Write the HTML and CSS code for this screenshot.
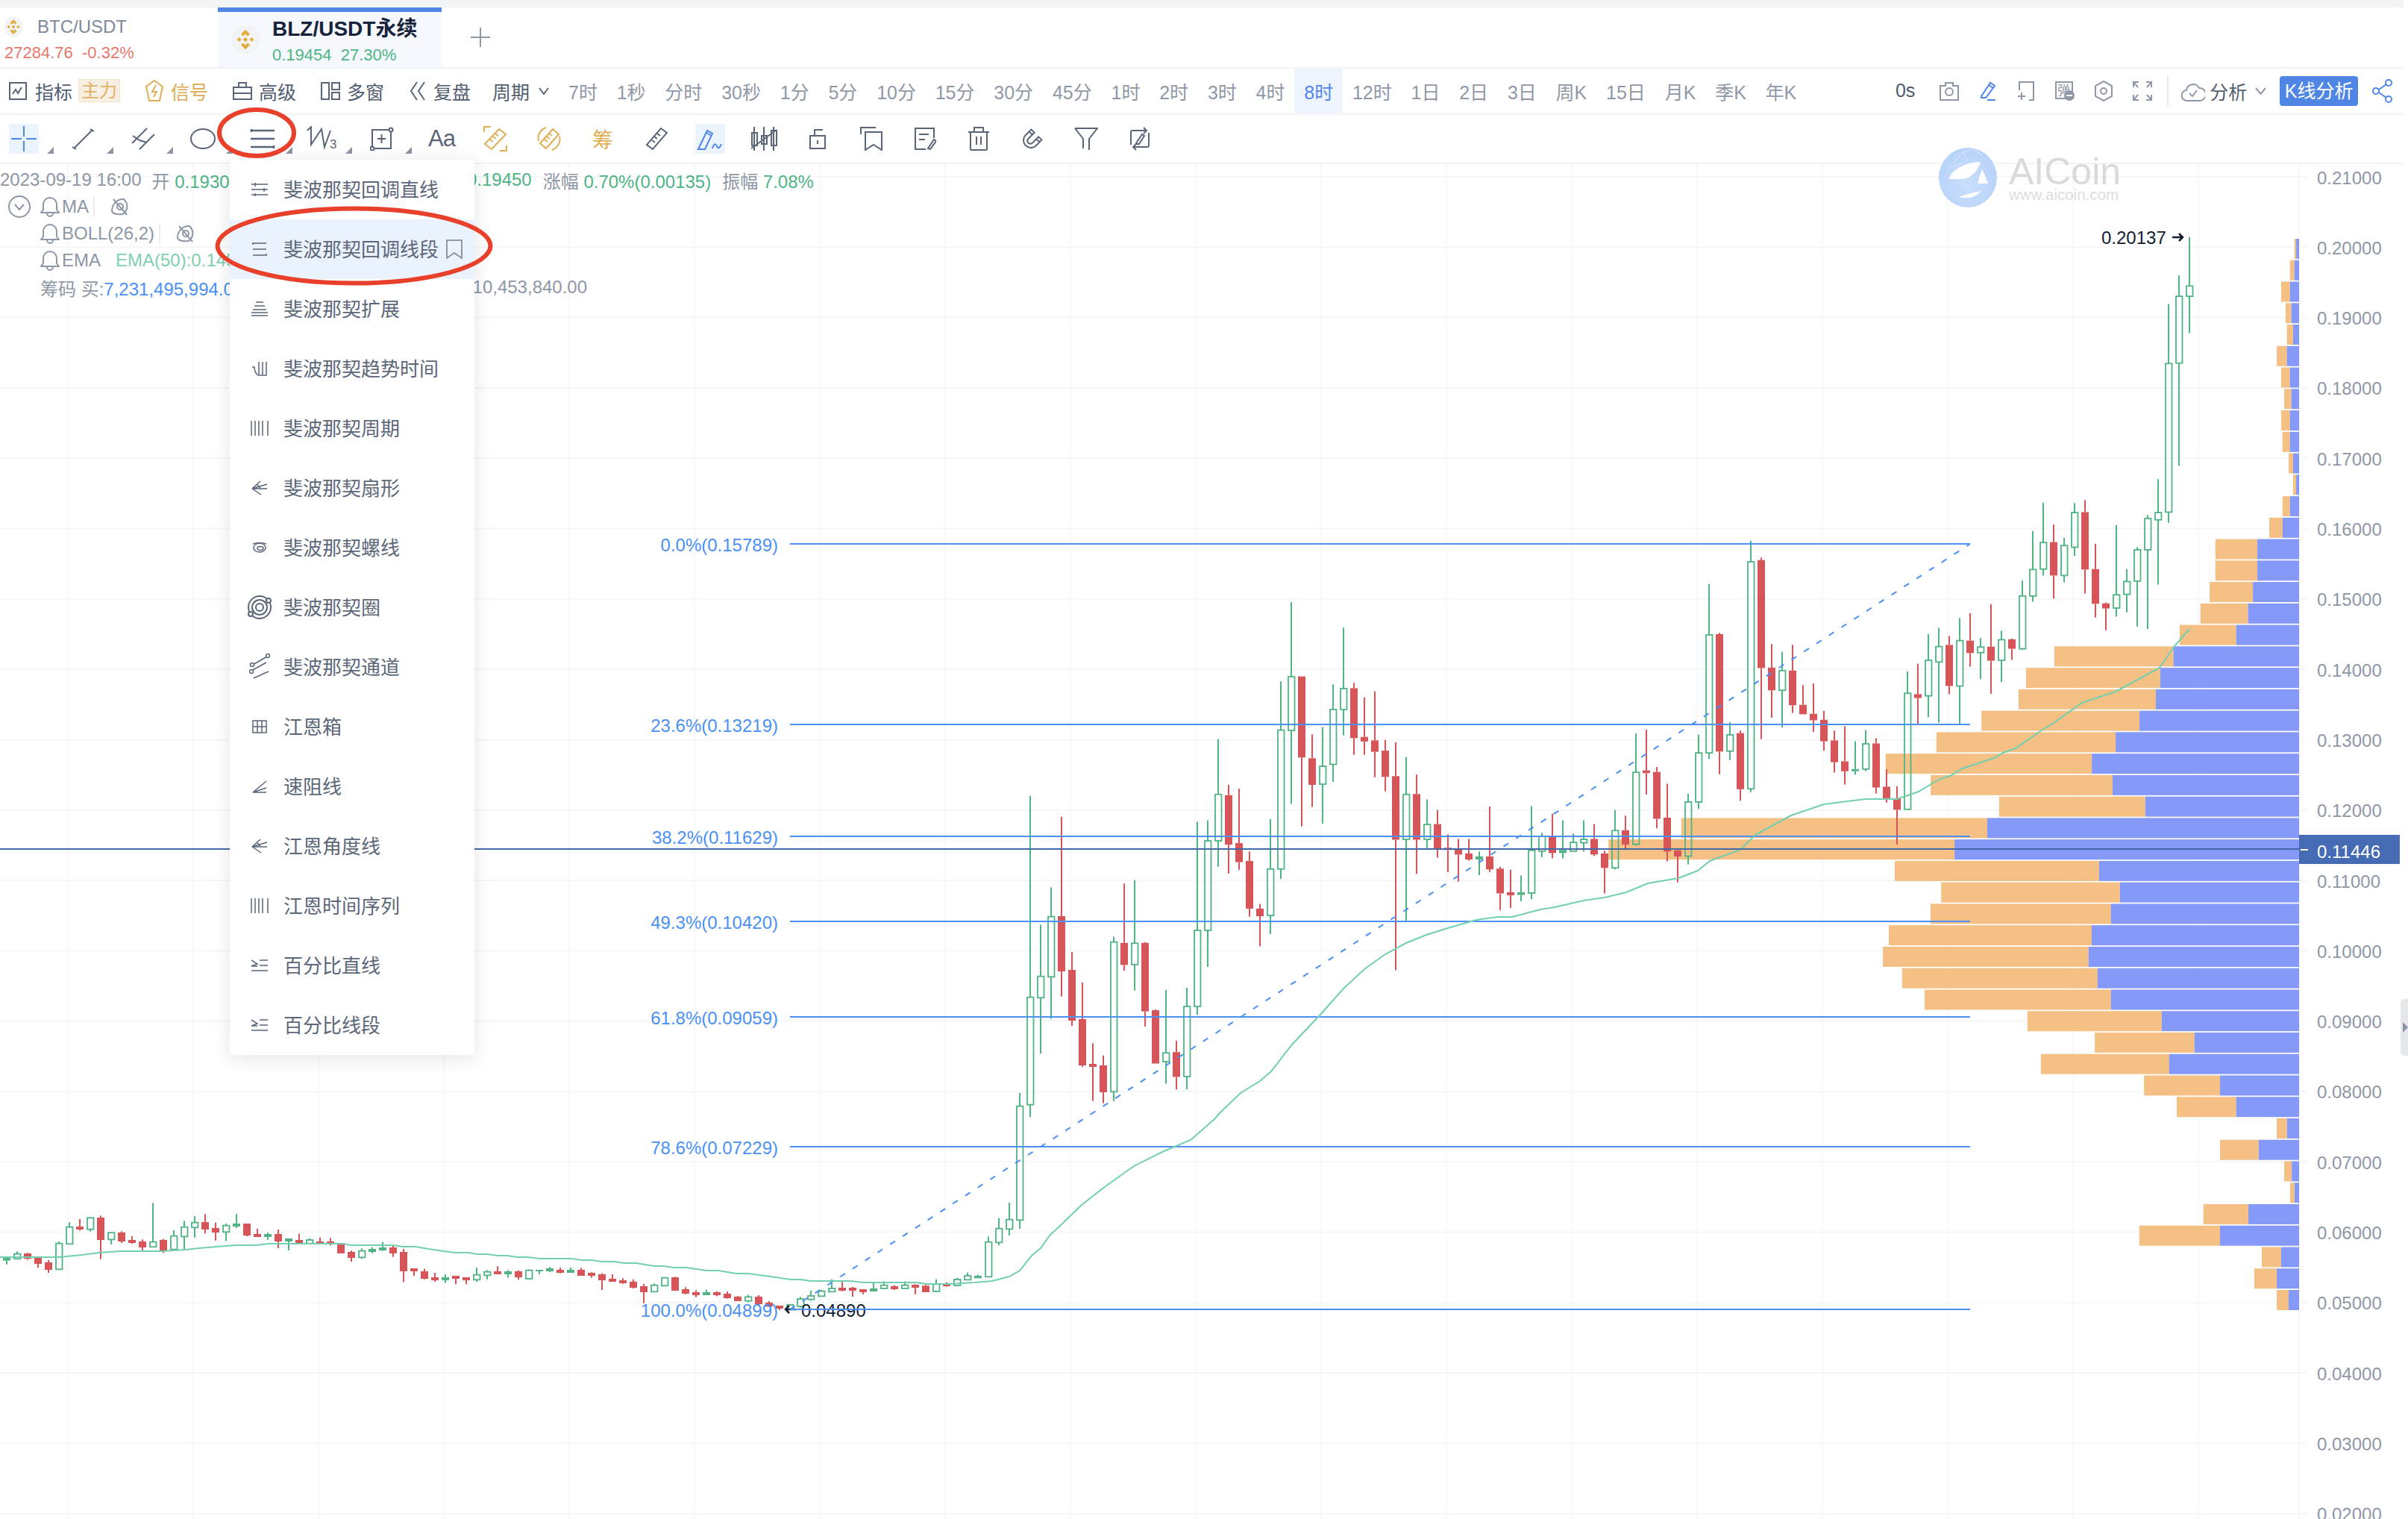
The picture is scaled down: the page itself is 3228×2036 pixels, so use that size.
FILE: index.html
```html
<!DOCTYPE html>
<html lang="zh-CN">
  <head>
    <meta charset="UTF-8" />
    <meta name="viewport" content="width=device-width, initial-scale=1.0" />
    <title>BLZ/USDT永续 - AICoin</title>
    <link rel="stylesheet" href="styles.css">
  </head>
  <body>
    <svg class="defs" width="0" height="0">
      <symbol id="binance" viewBox="0 0 24 24">
        <path d="M12 2l4.5 4.5-2.2 2.2L12 6.4 9.7 8.7 7.5 6.5zM12 22l-4.5-4.5 2.2-2.2 2.3 2.3 2.3-2.3 2.2 2.2zM3.5 12l2.2-2.2L7.9 12l-2.2 2.2zM20.500 12l-2.200-2.200L16.100 12l2.200 2.200zM12 9.600l2.400 2.400-2.400 2.400L9.600 12z"/>
      </symbol>
      <symbol id="bell" viewBox="0 0 26 28">
        <path d="M13 2a9 9 0 0 0-9 9v7l-3 4h24l-3-4v-7a9 9 0 0 0-9-9zM9 23a4 4 0 0 0 8 0"/>
      </symbol>
      <symbol id="eye-off" viewBox="0 0 26 28">
        <path d="M2 20C2 10 10 3 18 4c6 6 6 14-1 20C9 25 4 24 2 20z"/>
        <circle cx="13" cy="14" r="4"/>
        <path d="M4 4l18 21"/>
      </symbol>
      <symbol id="fan" viewBox="0 0 22 20">
        <path d="M1 11l20-6M1 11h20M1 11 12 1M1 11l12 8M7 5l5 5"/>
      </symbol>
      <symbol id="period" viewBox="0 0 24 22">
        <path d="M1 1v20M6 1v20M11 1v20M16 1v20M23 1v20"/>
      </symbol>
      <symbol id="percent" viewBox="0 0 24 18">
        <path d="M12 2h11M12 9h11M1 16h22M1 2l8 5-8 3h8"/>
      </symbol>
    </svg>

    <div class="app">
      <div class="top-strip"></div>

      <div class="tabs">
        <div class="tab">
          <div class="tab-name">
            <svg class="coin coin-sm"><use href="#binance" /></svg>
            <span>BTC/USDT</span>
          </div>
          <div class="tab-quote down">27284.76&nbsp; -0.32%</div>
        </div>
        <div class="tab tab-active">
          <svg class="coin coin-lg"><use href="#binance" /></svg>
          <div>
            <div class="tab-name">BLZ/USDT永续</div>
            <div class="tab-quote up">0.19454&nbsp; 27.30%</div>
          </div>
        </div>
        <svg class="tab-add ic" width="28" height="28" viewBox="0 0 28 28"><path d="M14 1v26M1 14h26" /></svg>
      </div>

      <div class="toolbar">
        <div class="tb-item tb-first">
          <svg class="ic" width="24" height="24" viewBox="0 0 24 24"><rect x="1" y="1" width="22" height="22" /><path d="M5 16l4-6 3 5 5-8" /></svg>
          <span>指标</span>
          <span class="tag">主力</span>
        </div>
        <div class="tb-item tb-gold">
          <svg class="ic" width="26" height="30" viewBox="0 0 26 30"><path d="M13 1l11 8-4 19H6L2 9z" /><path d="M15 7l-5 9h6l-4 7" /></svg>
          <span>信号</span>
        </div>
        <div class="tb-item">
          <svg class="ic" width="26" height="24" viewBox="0 0 26 24"><path d="M1 7h24v16H1zM1 15h24M8 7V1h10v6" /></svg>
          <span>高级</span>
        </div>
        <div class="tb-item">
          <svg class="ic" width="26" height="24" viewBox="0 0 26 24"><rect x="1" y="1" width="10" height="22" /><path d="M15 1h10v9H15zM15 14h10v9H15z" /></svg>
          <span>多窗</span>
        </div>
        <div class="tb-item">
          <svg class="ic" width="24" height="26" viewBox="0 0 24 26"><path d="M11 1 3 13l8 12M21 1l-8 12 8 12" /></svg>
          <span>复盘</span>
        </div>
        <div class="tb-item tb-period">
          <span>周期</span>
          <svg class="ic" width="14" height="10" viewBox="0 0 14 10"><path d="M1 1l6 8 6-8" /></svg>
        </div>
        <span class="period">7时</span>
        <span class="period">1秒</span>
        <span class="period">分时</span>
        <span class="period">30秒</span>
        <span class="period">1分</span>
        <span class="period">5分</span>
        <span class="period">10分</span>
        <span class="period">15分</span>
        <span class="period">30分</span>
        <span class="period">45分</span>
        <span class="period">1时</span>
        <span class="period">2时</span>
        <span class="period">3时</span>
        <span class="period">4时</span>
        <span class="period period-active">8时</span>
        <span class="period">12时</span>
        <span class="period">1日</span>
        <span class="period">2日</span>
        <span class="period">3日</span>
        <span class="period">周K</span>
        <span class="period">15日</span>
        <span class="period">月K</span>
        <span class="period">季K</span>
        <span class="period">年K</span>

        <div class="tb-right">
          <span class="countdown">0s</span>
          <svg class="ic ic-gray" width="26" height="26" viewBox="0 0 26 26"><path d="M1 6h7V2h10v4h7v19H1z" /><circle cx="13" cy="14" r="5" /></svg>
          <svg class="ic ic-blue" width="24" height="26" viewBox="0 0 24 26"><path d="M3 20 15 2l6 4-12 16H3zM13 5l6 4M11 25h11" /></svg>
          <svg class="ic ic-gray" width="24" height="26" viewBox="0 0 24 26"><path d="M3 12V1h19v24h-6M1 20h10M6 15v10" /></svg>
          <svg class="ic ic-gray" width="26" height="26" viewBox="0 0 26 26">
            <rect x="1" y="1" width="22" height="22" />
            <text class="ic-char" x="3" y="18">弹</text>
            <circle class="ic-solid" cx="19" cy="19" r="7" />
            <path class="ic-cut" d="M15 19h8" />
          </svg>
          <svg class="ic ic-gray" width="24" height="28" viewBox="0 0 24 28"><path d="M12 1l11 6v14l-11 6-11-6V7z" /><circle cx="12" cy="14" r="4" /></svg>
          <svg class="ic ic-gray" width="26" height="26" viewBox="0 0 26 26"><path d="M1 8V1h7M1 1l6 7M25 8V1h-7M25 1l-6 7M1 18v7h7M1 25l6-7M25 18v7h-7M25 25l-6-7" /></svg>
          <div class="tb-analysis">
            <svg class="ic ic-gray" width="32" height="30" viewBox="0 0 32 30"><path d="M8 28a7 7 0 0 1-1-14 9 9 0 0 1 17-3 8.500 8.500 0 0 1 1 17zM11 18l4 4 6-8" /></svg>
            <span>分析</span>
            <svg class="ic ic-gray" width="15" height="10" viewBox="0 0 15 10"><path d="M1 1l6.500 8L14 1" /></svg>
          </div>
          <span class="btn-kline">K线分析</span>
          <svg class="ic ic-blue" width="28" height="32" viewBox="0 0 28 32"><circle cx="5" cy="16" r="4" /><circle cx="22" cy="5" r="4" /><circle cx="22" cy="27" r="4" /><path d="M9 14l10-7M9 18l10 7" /></svg>
        </div>
      </div>

      <div class="tools">
        <div class="tool tool-on tool-more">
          <svg class="ic ic-blue" width="40" height="40" viewBox="0 0 40 40"><path d="M20 3v14M20 23v14M3 20h14M23 20h14" /></svg>
        </div>
        <div class="tool tool-more">
          <svg class="ic" width="32" height="30" viewBox="0 0 32 30"><path d="M4 27 28 3M1 26l5 3M25 2l5 3" /></svg>
        </div>
        <div class="tool tool-more">
          <svg class="ic" width="34" height="32" viewBox="0 0 34 32"><path d="M2 22 22 2M12 30 32 10M3 12l9 6 10 3" /></svg>
        </div>
        <div class="tool tool-more">
          <svg class="ic" width="34" height="28" viewBox="0 0 34 28"><ellipse cx="17" cy="14" rx="16" ry="13" /></svg>
        </div>
        <div class="tool tool-more">
          <svg class="ic ic-thick" width="34" height="28" viewBox="0 0 34 28"><path d="M1 3h32M1 14h32M1 25h32M2 1v4M32 23v4" /></svg>
        </div>
        <div class="tool tool-more">
          <svg class="ic" width="42" height="34" viewBox="0 0 42 34">
            <path d="M1 6l5-5v24L20 4l4 24L32 6" />
            <text class="ic-char ic-num" x="31" y="30">3</text>
          </svg>
        </div>
        <div class="tool tool-more">
          <svg class="ic" width="32" height="32" viewBox="0 0 32 32"><rect x="3" y="4" width="25" height="25" /><circle class="ic-white" cx="28" cy="4" r="2.500" /><circle class="ic-white" cx="3" cy="29" r="2.500" /><path d="M15.500 10v12M10 16h11" /></svg>
        </div>
        <div class="tool tool-text">Aa</div>
        <div class="tool">
          <svg class="ic ic-gold" width="34" height="34" viewBox="0 0 34 34"><path d="M2 8V1h9M32 26v7h-9M22 4l9 7-19 20-9-7zM17 10l4 3M14 14l4 3M10 18l4 3" /></svg>
        </div>
        <div class="tool">
          <svg class="ic ic-gold" width="32" height="34" viewBox="0 0 32 34"><path d="M2 20A15 15 0 0 1 12 2M30 14a15 15 0 0 1-10 18M21 4l8 7-17 19-8-7zM16 10l4 3M13 14l4 3M10 18l4 3" /></svg>
        </div>
        <div class="tool tool-char">筹</div>
        <div class="tool">
          <svg class="ic" width="30" height="32" viewBox="0 0 30 32"><path d="M21 2l8 6L10 30l-8-6zM16 9l4 3M12 13l4 3M9 18l4 3" /></svg>
        </div>
        <div class="tool tool-on">
          <svg class="ic ic-blue" width="38" height="36" viewBox="0 0 38 36"><path d="M3 32 15 7l7 4-10 21zM14 10l7 4M22 31c2-7 4-7 6-3s3 3 6-3" /></svg>
        </div>
        <div class="tool">
          <svg class="ic" width="36" height="34" viewBox="0 0 36 34"><path d="M5 1v32M18 1v32M31 1v32M2 9h7v17H2zM15 13h7v11h-7zM28 6h7v20h-7zM1 30 35 5" /></svg>
        </div>
        <div class="tool">
          <svg class="ic" width="22" height="28" viewBox="0 0 22 28"><rect x="1" y="10" width="20" height="17" /><path d="M7 10V2h11M11 16v5" /></svg>
        </div>
        <div class="tool">
          <svg class="ic" width="30" height="32" viewBox="0 0 30 32"><path d="M1 10V1h20M7 7h22v24l-11-7-11 7z" /></svg>
        </div>
        <div class="tool">
          <svg class="ic" width="30" height="30" viewBox="0 0 30 30"><path d="M27 14V1H2v28h14M7 9h13M7 16h8M19 28l8-12 3 2-8 11z" /></svg>
        </div>
        <div class="tool">
          <svg class="ic" width="30" height="32" viewBox="0 0 30 32"><path d="M1 7h28M9 7V1h12v6M4 7v23a1 1 0 0 0 1 1h20a1 1 0 0 0 1-1V7M12 13v11M18 13v11" /></svg>
        </div>
        <div class="tool">
          <svg class="ic" width="30" height="30" viewBox="0 0 30 30"><path d="M13.400 2.600l4.200 4.200-8.400 8.400a4 4 0 0 0 5.600 5.600l8.400-8.400 4.200 4.200-8.400 8.400A10 10 0 0 1 5 11zM10.600 5.400l4.200 4.200M24.600 19.400 20 15.200" /></svg>
        </div>
        <div class="tool">
          <svg class="ic" width="32" height="32" viewBox="0 0 32 32"><path d="M1 2h30L20 16v15M1 2l11 14v13" /></svg>
        </div>
        <div class="tool">
          <svg class="ic" width="30" height="34" viewBox="0 0 30 34"><path d="M24 6H5a2 2 0 0 0-2 2v17M20 2l4 4-4 4M6 28h19a2 2 0 0 0 2-2V9M10 24l-4 4 4 4M10 23l8-12 3 2-7 11h-4z" /></svg>
        </div>
      </div>

      <div class="chart">
        <svg id="chart" class="chart-svg" width="3228" height="1816" viewBox="0 220 3228 1816"></svg>

        <div class="watermark">
          <svg class="watermark-drop" width="78" height="80" viewBox="0 0 78 80">
            <defs>
              <radialGradient id="drop" cx="50%" cy="60%" r="60%">
                <stop offset="0%" stop-color="#c9dffd" />
                <stop offset="100%" stop-color="#b7d2f9" />
              </radialGradient>
            </defs>
            <ellipse cx="39" cy="40" rx="39" ry="40" fill="url(#drop)" />
            <path fill="#fff" d="M14 42C16 30 36 19 56 19 54 28 44 42 30 42zM58 28l8 20H52zM26 66c8-2 18-6 30-8-4 6-14 12-30 8z" />
            <path fill="none" stroke="#dbe8fb" d="M20 20l12-14 14-4 12 8M32 6l8 14M12 28l20-8" />
          </svg>
          <div>
            <div class="watermark-name">AICoin</div>
            <div class="watermark-url">www.aicoin.com</div>
          </div>
        </div>

        <div class="legend">
          <div class="legend-row legend-quote">
            <span>2023-09-19 16:00</span>
            <span class="lq-first">开 <b>0.19305</b></span>
            <span class="lq-close"><b>0.19450</b></span>
            <span class="lq-change">涨幅 <b>0.70%(0.00135)</b></span>
            <span class="lq-change">振幅 <b>7.08%</b></span>
          </div>
          <div class="legend-row legend-ma">
            <svg class="legend-toggle ic ic-muted" width="30" height="30" viewBox="0 0 30 30"><circle cx="15" cy="15" r="14" /><path d="M9 12l6 7 6-7" /></svg>
            <svg class="ic ic-muted" width="26" height="28"><use href="#bell" /></svg>
            <span class="legend-name">MA</span>
            <svg class="ic ic-muted legend-eye" width="26" height="28"><use href="#eye-off" /></svg>
          </div>
          <div class="legend-row legend-sub">
            <svg class="ic ic-muted" width="26" height="28"><use href="#bell" /></svg>
            <span class="legend-name">BOLL(26,2)</span>
            <svg class="ic ic-muted legend-eye" width="26" height="28"><use href="#eye-off" /></svg>
          </div>
          <div class="legend-row legend-sub">
            <svg class="ic ic-muted" width="26" height="28"><use href="#bell" /></svg>
            <span class="legend-plain">EMA</span>
            <span class="legend-ema">EMA(50):0.14512</span>
          </div>
          <div class="legend-row legend-sub legend-chips">
            <span>筹码 买:<em>7,231,495,994.00</em></span>
            <span class="legend-chips-rest">7,210,453,840.00</span>
          </div>
        </div>

        <div class="menu">
          <div class="menu-item">
            <svg class="ic ic-thin" width="24" height="20" viewBox="0 0 24 20"><path d="M1 3h22M1 10h22M1 17h22M6 1v5M18 8v5M6 15v4" /></svg>
            <span>斐波那契回调直线</span>
          </div>
          <div class="menu-item menu-item-on">
            <svg class="ic ic-thin" width="24" height="20" viewBox="0 0 24 20"><path d="M3 2h18M3 10h18M3 18h18M3 1v3M21 16v3" /></svg>
            <span>斐波那契回调线段</span>
            <svg class="menu-mark ic ic-muted" width="22" height="26" viewBox="0 0 22 26"><path d="M1 1h20v24l-10-7-10 7z" /></svg>
          </div>
          <div class="menu-item">
            <svg class="ic ic-thin" width="24" height="22" viewBox="0 0 24 22"><path d="M7 2h10M5 7h14M3 12h18M1 16h22M1 20h22" /></svg>
            <span>斐波那契扩展</span>
          </div>
          <div class="menu-item">
            <svg class="ic ic-thin" width="22" height="22" viewBox="0 0 22 22"><path d="M1 9h3c0 6 2 9 5 11h12M10 2v17M15 2v17M20 2v17" /></svg>
            <span>斐波那契趋势时间</span>
          </div>
          <div class="menu-item">
            <svg class="ic ic-thin" width="24" height="22"><use href="#period" /></svg>
            <span>斐波那契周期</span>
          </div>
          <div class="menu-item">
            <svg class="ic ic-thin" width="22" height="20"><use href="#fan" /></svg>
            <span>斐波那契扇形</span>
          </div>
          <div class="menu-item">
            <svg class="ic ic-thin" width="20" height="18" viewBox="0 0 20 18"><ellipse cx="10" cy="9" rx="8" ry="6" /><ellipse cx="11" cy="10" rx="4" ry="2.500" /><path d="M1 4c6-2 12-2 18 0" /></svg>
            <span>斐波那契螺线</span>
          </div>
          <div class="menu-item">
            <svg class="ic ic-wide" width="36" height="34" viewBox="0 0 36 34"><circle cx="18" cy="17" r="15" /><circle cx="18" cy="17" r="10" /><circle cx="18" cy="17" r="5" /><circle class="ic-white" cx="30" cy="8" r="3" /><circle class="ic-white" cx="6" cy="26" r="3" /></svg>
            <span>斐波那契圈</span>
          </div>
          <div class="menu-item">
            <svg class="ic ic-thin ic-wide" width="28" height="36" viewBox="0 0 28 36"><path d="M5 15l19-11M3 23l20-11M6 33l20-9" /><circle class="ic-white" cx="4" cy="15" r="2.500" /><circle class="ic-white" cx="25" cy="3" r="2.500" /><circle class="ic-white" cx="3" cy="24" r="2.500" /></svg>
            <span>斐波那契通道</span>
          </div>
          <div class="menu-item">
            <svg class="ic ic-thin" width="20" height="18" viewBox="0 0 20 18"><path d="M1 1h18v16H1zM1 9h18M7 1v16M13 1v16" /></svg>
            <span>江恩箱</span>
          </div>
          <div class="menu-item">
            <svg class="ic ic-thin" width="20" height="20" viewBox="0 0 20 20"><path d="M1 18 19 3M1 18l18-6M1 18h18" /></svg>
            <span>速阻线</span>
          </div>
          <div class="menu-item">
            <svg class="ic ic-thin" width="22" height="20"><use href="#fan" /></svg>
            <span>江恩角度线</span>
          </div>
          <div class="menu-item">
            <svg class="ic ic-thin" width="24" height="22"><use href="#period" /></svg>
            <span>江恩时间序列</span>
          </div>
          <div class="menu-item">
            <svg class="ic ic-thin" width="24" height="18"><use href="#percent" /></svg>
            <span>百分比直线</span>
          </div>
          <div class="menu-item">
            <svg class="ic ic-thin" width="24" height="18"><use href="#percent" /></svg>
            <span>百分比线段</span>
          </div>
        </div>
      </div>

      <div class="side-handle"></div>
    </div>

    <svg class="marks" width="700" height="400" viewBox="0 0 700 400">
      <ellipse cx="344" cy="178" rx="50" ry="31" />
      <ellipse cx="474.500" cy="329.500" rx="183" ry="50" />
    </svg>

    <script src="chart.js"></script>
  </body>
</html>
```

FILE: styles.css
```css
* {
  margin: 0;
  padding: 0;
  box-sizing: border-box;
}

body {
  font-family: "Liberation Sans", "Noto Sans CJK SC", sans-serif;
  background: #fff;
  width: 3228px;
  height: 2036px;
  overflow: hidden;
  position: relative;
  color: #525e70;
}

.defs {
  position: absolute;
}

.app {
  width: 3222px;
}

.top-strip {
  height: 10px;
  background: #f2f3f5;
}

/* svg icons */
.ic {
  flex: none;
  fill: none;
  stroke: #5a6678;
  stroke-width: 2;
}

.ic-gray {
  stroke: #8f98a6;
}

.ic-blue {
  stroke: #4f86ea;
}

.ic-gold {
  stroke: #dfae55;
}

.ic-muted {
  stroke: #8d97a5;
}

.ic-thin {
  stroke-width: 1.5;
}

.ic-thick {
  stroke-width: 2.5;
}

.ic-wide {
  margin-left: -6px;
  margin-right: -6px;
}

.ic-white {
  fill: #fff;
}

.ic-solid {
  fill: #8f98a6;
  stroke: none;
}

.ic-cut {
  stroke: #fff;
}

.ic-char {
  font-size: 17px;
  fill: #8f98a6;
  stroke: none;
}

.ic-num {
  font-size: 17px;
  fill: #5a6678;
}

/* tabs */
.tabs {
  height: 82px;
  display: flex;
  align-items: center;
  border-bottom: 2px solid #f2f3f5;
}

.tab {
  width: 292px;
  height: 80px;
  padding: 12px 0 0 6px;
  flex: none;
}

.tab-name {
  display: flex;
  align-items: center;
  font-size: 24px;
  height: 28px;
  color: #7e8a99;
}

.tab-quote {
  font-size: 22px;
  margin-top: 8px;
}

.tab-quote.down {
  color: #e8776d;
}

.tab-quote.up {
  color: #4eb485;
}

.coin {
  flex: none;
  fill: #e0ac3c;
  background: #f2f3f5;
  border-radius: 50%;
}

.coin-sm {
  width: 24px;
  height: 28px;
  margin-right: 20px;
}

.coin-lg {
  width: 38px;
  height: 38px;
  padding: 3px;
  margin-right: 17px;
}

.tab-active {
  width: 300px;
  display: flex;
  align-items: center;
  padding: 0 0 0 18px;
  background: #f5f8fc;
  border-top: 6px solid #4f86e5;
}

.tab-active .tab-name {
  font-size: 28px;
  font-weight: bold;
  height: 32px;
  color: #16233a;
}

.tab-active .tab-quote {
  margin-top: 9px;
}

.tab-add {
  margin-left: 38px;
  stroke: #8f98a6;
}

/* main toolbar */
.toolbar {
  height: 62px;
  display: flex;
  align-items: stretch;
  font-size: 25px;
  padding-bottom: 1px;
  border-bottom: 2px solid #f2f3f5;
}

.tb-item {
  display: flex;
  align-items: center;
  gap: 9px;
  margin-right: 33px;
}

.tb-first {
  margin-left: 12px;
  gap: 11px;
}

.tag {
  height: 31px;
  width: 56px;
  margin-left: -3px;
  background: #f8efe3;
  border: 1px solid #f3e2cc;
  color: #e3b266;
  font-size: 24px;
  line-height: 29px;
  text-align: center;
}

.tb-gold {
  color: #dcaa50;
}

.tb-gold .ic {
  stroke: #dfae55;
}

.tb-period {
  gap: 12px;
  margin-right: 13px;
  margin-left: -4px;
}

.period {
  display: flex;
  align-items: center;
  padding: 0 12.9px;
  color: #8f98a6;
}

.period-active {
  color: #4f86ea;
  background: #eef4fd;
  margin-bottom: -1px;
}

.tb-right {
  margin-left: auto;
  padding-right: 14px;
  display: flex;
  align-items: center;
  gap: 27px;
}

.countdown {
  color: #4e5a6b;
  margin-right: 6px;
}

.tb-analysis {
  display: flex;
  align-items: center;
  gap: 11px;
  margin-left: -7px;
  padding-left: 17px;
  height: 40px;
  border-left: 2px solid #e8eaed;
}

.tb-analysis span {
  margin-left: -5px;
}

.btn-kline {
  height: 40px;
  line-height: 40px;
  padding: 0 6.5px;
  margin-left: -9px;
  margin-right: -8px;
  background: #4f86e5;
  border-radius: 4px;
  color: #fff;
}

/* drawing tools */
.tools {
  height: 66px;
  display: flex;
  align-items: center;
  padding-left: 12px;
  border-bottom: 2px solid #f2f3f5;
}

.tool {
  position: relative;
  width: 40px;
  height: 40px;
  margin-right: 32px;
  flex: none;
  display: flex;
  align-items: center;
  justify-content: center;
}

.tool-more {
  margin-right: 40px;
}

.tool-more::after {
  content: "";
  position: absolute;
  right: -20px;
  bottom: 0;
  border-style: solid;
  border-width: 0 0 9px 9px;
  border-color: transparent transparent #8a94a3 transparent;
}

.tool-on {
  background: #ebf3fd;
}

.tool-text {
  font-size: 31px;
  color: #5a6678;
  letter-spacing: -1px;
}

.tool-char {
  font-size: 28px;
  color: #dfae55;
}

/* chart */
.chart {
  position: relative;
  height: 1816px;
}

.chart-svg {
  display: block;
  font-family: "Liberation Sans", sans-serif;
  font-size: 24px;
}

.axis-label {
  fill: #8e97a6;
}

.axis-tag {
  fill: #fff;
}

.fib-label {
  fill: #4a90f5;
}

.peak-label {
  fill: #101c30;
}

.watermark {
  position: absolute;
  left: 2599px;
  top: -22px;
  display: flex;
  gap: 16px;
}

.watermark-name {
  font-size: 50px;
  line-height: 38px;
  margin-top: 13px;
  color: #d8dadd;
}

.watermark-url {
  font-size: 20.5px;
  color: #dcdee1;
}

.legend {
  position: absolute;
  left: 0;
  top: 3px;
  font-size: 24px;
  color: #8d97a5;
}

.legend-row {
  display: flex;
  align-items: center;
  height: 36px;
  white-space: nowrap;
}

.legend-quote b {
  font-weight: normal;
  color: #4eb485;
}

.lq-first {
  margin-left: 14px;
}

/* the rest of the quote sits behind the open menu */
.lq-close {
  margin-left: 305px;
}

.lq-change {
  margin-left: 15px;
}

.legend-ma {
  padding-left: 11px;
}

.legend-toggle {
  margin-right: 13px;
}

.legend-sub {
  padding-left: 54px;
}

.legend-name {
  padding: 0 6px 0 3px;
  border-right: 2px solid #eceef1;
}

.legend-plain {
  margin-left: 3px;
}

.legend-eye {
  margin-left: 21px;
}

.legend-ema {
  margin-left: 20px;
  color: #7fd0b1;
}

.legend-chips em {
  font-style: normal;
  color: #4a90f5;
}

.legend-chips-rest {
  margin-left: 274px;
}

/* fibonacci dropdown */
.menu {
  position: absolute;
  left: 308px;
  top: -6px;
  width: 328px;
  background: #fff;
  border-radius: 6px;
  box-shadow: 0 4px 24px rgba(30, 40, 60, 0.12);
  font-size: 26px;
  color: #5c6779;
  z-index: 2;
}

.menu-item {
  position: relative;
  height: 80px;
  display: flex;
  align-items: center;
  padding: 0 0 3px 72px;
}

.menu-item .ic {
  position: absolute;
  left: 40px;
  top: 50%;
  transform: translate(-50%, -50%);
  margin: 0;
}

.menu-item span {
  white-space: nowrap;
}

.menu-item-on {
  background: #eaf3fd;
}

.menu-item .menu-mark {
  left: 301px;
}

.side-handle {
  position: absolute;
  right: 0;
  top: 1339px;
  width: 10px;
  height: 76px;
  background: #e5e7ea;
  border-radius: 5px 0 0 5px;
}

.side-handle::after {
  content: "";
  position: absolute;
  left: 3px;
  top: 31px;
  border-style: solid;
  border-width: 7px 0 7px 7px;
  border-color: transparent transparent transparent #8a94a3;
}

/* red annotations on top of the screenshot */
.marks {
  position: absolute;
  left: 0;
  top: 0;
  fill: none;
  stroke: #e8402a;
  stroke-width: 6;
  z-index: 3;
}
```

FILE: chart.js
```js
// candles are [up, high, bodyTop, bodyBottom, low], all in a block share y0/scale
const blocks = [
  { y0: 1590, scale: 3, rows: [
    [1,288,288,299,314],[1,262,272,292,292],[0,268,270,292,296],[0,285,288,312,328],[0,297,306,336,348],
    [1,222,230,334,334],[1,145,164,232,232],[0,132,162,174,178],[1,125,127,173,182],[0,118,126,216,293],
    [1,184,187,214,234],[0,181,186,222,228],[0,201,216,228,231],[0,214,222,246,258],[1,67,224,244,244],
    [0,212,216,258,268],[1,177,200,254,254],[1,139,164,202,254],[1,120,146,166,206],[0,112,144,174,190],
    [0,146,168,186,218],[1,150,158,184,220],[1,111,150,162,168],[0,150,150,198,201],[0,171,192,204,204],
    [1,186,192,204,216],[0,174,192,222,249],[1,210,210,222,258],[0,191,216,230,232],[1,210,216,230,230],
    [0,206,222,230,232],[0,208,222,232,238],[0,228,232,270,270],[0,259,264,288,303],[1,250,260,286,292],
    [1,245,252,264,270],[1,224,246,258,260],
    [0,240,246,270,284],[0,252,264,342,385],[0,330,330,342,360],[0,332,342,372,374],[0,348,366,378,384],
    [1,354,366,378,389],[0,360,360,372,394],[0,366,366,378,394],[1,327,356,376,384],[1,337,344,358,374],
    [0,322,342,354,354],[1,337,342,354,368],[0,338,342,366,376],[1,334,338,372,375],[1,336,336,342,354],
    [1,325,330,342,345],[0,327,336,348,350],[1,327,336,348,348],[0,328,336,360,360],[0,346,348,360,368],
    [0,350,354,378,417],[0,354,372,384,384],[0,370,378,390,392],[0,374,384,408,411],[0,393,402,426,470],
    [1,391,398,424,426],[1,366,368,400,402],[0,364,366,420,420],[0,406,414,432,434],[0,418,426,438,446],
    [1,416,426,438,438],[0,422,426,438,442],[0,423,432,450,452],[0,441,444,462,462],[1,436,445,461,466],
    [0,438,444,474,482],[0,462,468,484,486]
  ] },
  { y0: 1400, scale: 3, rows: [
    [0,1050,1050,1062,1068],[1,1045,1047,1065,1068],[1,1015,1023,1053,1058],[1,990,1011,1025,1030],
    [1,987,992,1012,1012],[1,944,981,994,994],[0,954,978,990,992],[0,975,978,990,1014],[0,984,984,996,1004],
    [1,960,981,993,993],[1,952,968,981,983],[0,968,972,984,987],[1,952,968,981,981],[0,964,966,978,1004],
    [0,966,970,996,996],[1,944,964,993,995],[0,956,966,972,974],[1,938,945,969,972],[1,917,930,946,946],
    [1,926,930,940,940],[1,773,794,934,934],[1,698,740,796,808],[1,636,704,742,768],[1,195,248,706,741]
  ] },
  { y0: 1040, scale: 3, rows: [
    [1,80,890,1322,1372],[1,598,806,892,1117],[1,448,566,808,977],[0,164,564,786,887],[0,708,780,984,1006],
    [0,831,978,1164,1170],[0,1075,1158,1170,1307],[0,1124,1164,1272,1316],[1,646,668,1270,1308]
  ] },
  { y0: 700, scale: 1.96, rows: [
    [0,949,1105,1163,1178],[1,940,1106,1162,1230],[0,1103,1105,1285,1325],[0,1280,1282,1422,1422],
    [1,1229,1394,1417,1475],[0,1362,1392,1457,1490],[1,1223,1272,1456,1490],[1,787,1072,1272,1294],
    [1,783,837,1072,1168],[1,570,715,837,905],[0,690,717,847,923],[0,700,843,893,913],[0,865,890,1015,1036],
    [0,1003,1015,1035,1114],[1,780,911,1033,1082],[1,418,546,911,937],[1,210,406,547,740],[0,405,405,618,799],
    [0,557,620,690,748],[1,538,641,688,792],[1,426,492,636,682],[1,277,437,492,560],[0,422,436,567,611],
    [0,460,564,576,611],[0,444,573,603,670],[0,572,600,669,707],[0,578,667,834,1177],[1,617,715,833,1050],
    [0,663,714,834,924],[1,728,794,833,857],[0,756,793,858,881],[0,820,855,861,919],[0,832,858,873,944],
    [0,832,870,886,889],[1,865,878,886,927],[0,747,878,912,919],[0,905,910,975,1019],[0,913,972,980,1013],
    [1,928,972,979,996],[1,746,862,974,990],[1,816,825,864,880],[0,766,826,869,883],[1,783,861,869,883],
    [1,818,841,864,864],[1,783,833,842,865],[0,793,832,873,877],[0,863,870,908,975],[1,756,810,908,912],
    [0,771,809,847,858],[1,555,657,846,849],[0,545,652,659,715],[0,643,656,779,804],[0,687,776,865,891],
    [0,856,862,878,946],[1,713,735,877,899],[1,558,606,735,753],[1,162,296,606,622]
  ] },
  { y0: 280, scale: 1.742, rows: [
    [0,990,993,1267,1320],[1,1198,1228,1266,1287],[0,1218,1224,1355,1382],[1,775,824,1354,1362],
    [0,814,820,1072,1238],[0,1016,1071,1124,1188],[1,1034,1078,1124,1211],[0,1018,1078,1159,1177],
    [0,1112,1158,1180,1180],[0,1108,1179,1194,1221],[0,1172,1193,1243,1265],[0,1218,1241,1292,1316],
    [0,1208,1290,1313,1344],[1,1243,1308,1313,1321],[1,1217,1249,1308,1313],[0,1236,1248,1351,1365],
    [0,1308,1349,1376,1386],[0,1348,1376,1403,1484],[1,1080,1131,1402,1402],[0,1062,1133,1142,1202],
    [1,993,1054,1137,1187],[1,978,1022,1058,1200],[0,997,1018,1114,1133],[1,955,1008,1114,1203],
    [0,944,1008,1037,1069],[1,1002,1023,1036,1098],[0,923,1022,1055,1132],[1,985,1006,1054,1105],
    [0,1003,1005,1027,1053],[1,868,904,1027,1030],[1,752,842,904,917],[1,686,779,841,856],
    [0,737,778,856,910],[1,768,786,856,872],[1,687,709,790,810],[0,680,708,842,898],[0,782,841,922,954],
    [0,919,921,933,984],[1,738,901,932,952],[1,841,870,900,942],[1,790,796,869,975],[1,715,723,796,981],
    [1,631,709,726,877],[1,222,361,708,733],[1,155,204,360,600],[1,66,180,204,290]
  ] }
];

// volume profile, [orange left, blue left] per row
const profileTop = [
  [1311,1315],[1301,1311],[1281,1301],[1291,1304],[1294,1308],[1271,1294],[1281,1301],[1288,1304],
  [1281,1301],[1284,1301],[1298,1308],[1308,1315],[1284,1301],[1254,1284],[1132,1227],[1132,1227],
  [1119,1217],[1098,1206],[1051,1179],[767,1037],[703,1007],[686,997],[602,960],[500,906],[385,852],
  [487,899],[642,973],[-78,615],[-243,541]
];
const profileBottom = [
  [265,784],[383,837],[356,814],[250,765],[235,757],[284,780],[341,814],[602,943],[773,1026],[636,962],
  [898,1091],[981,1132],[1235,1261],[1091,1189],[1254,1273],[1269,1280],[1049,1163],[886,1091],
  [1197,1246],[1178,1235],[1235,1265]
];

const ema = [
  [0,1685],[80,1685],[110,1682],[133,1679],[163,1677],[217,1677],[250,1675],[267,1673],[290,1671],[317,1669],
  [343,1669],[360,1667],[460,1667],[470,1669],[527,1669],[540,1671],[557,1671],[580,1675],[610,1679],[627,1679],
  [640,1681],[653,1681],[667,1683],[680,1683],[693,1685],[707,1685],[723,1687],[767,1687],[780,1689],[793,1689],
  [807,1691],[823,1691],[837,1693],[853,1693],[877,1697],[890,1697],[903,1699],[920,1699],[947,1703],[963,1703],
  [987,1707],[1003,1707],[1040,1712],[1060,1715],[1073,1715],[1087,1717],[1140,1717],[1157,1719],[1227,1719],
  [1243,1721],[1273,1721],[1307,1719],[1330,1717],[1353,1711],[1367,1703],[1383,1683],[1395,1673],[1408,1655],
  [1420,1644],[1450,1615],[1482,1590],[1520,1563],[1560,1543],[1596,1528],[1628,1500],[1635,1492],[1663,1465],
  [1689,1449],[1704,1436],[1732,1400],[1769,1361],[1801,1325],[1829,1299],[1857,1279],[1885,1264],[1912,1253],
  [1944,1243],[1979,1233],[2008,1229],[2027,1229],[2065,1219],[2084,1216],[2123,1207],[2151,1203],[2180,1196],
  [2209,1184],[2250,1177],[2276,1167],[2292,1154],[2300,1151],[2333,1139],[2353,1119],[2401,1093],[2445,1078],
  [2501,1071],[2543,1071],[2572,1061],[2599,1045],[2614,1040],[2631,1030],[2673,1016],[2685,1009],[2702,1003],
  [2738,978],[2753,969],[2791,942],[2836,927],[2895,895],[2915,866],[2935,843]
];

const fibLevels = [
  ["0.0%(0.15789)", 729],
  ["23.6%(0.13219)", 971],
  ["38.2%(0.11629)", 1121],
  ["49.3%(0.10420)", 1235],
  ["61.8%(0.09059)", 1363],
  ["78.6%(0.07229)", 1537],
  ["100.0%(0.04899)", 1755]
];

const GREEN = "#52b385";
const RED = "#d55558";
const FIB = "#4a90f5";
const INK = "#101c30";

let out = "";

function rect(x, y, w, h, fill) {
  out += `<rect x="${x}" y="${y}" width="${w}" height="${h}" fill="${fill}"/>`;
}

function line(x1, y1, x2, y2, stroke, extra = "") {
  out += `<line x1="${x1}" y1="${y1}" x2="${x2}" y2="${y2}" stroke="${stroke}" stroke-width="2" ${extra}/>`;
}

function text(x, y, cls, str, anchor = "start") {
  out += `<text x="${x}" y="${y}" class="${cls}" text-anchor="${anchor}" dominant-baseline="central">${str}</text>`;
}

function path(d, stroke, width) {
  out += `<path d="${d}" fill="none" stroke="${stroke}" stroke-width="${width}"/>`;
}

// grid
for (let x = 91; x < 3090; x += 168) line(x, 220, x, 2036, "#f7f8fa");
for (let k = 0; k < 20; k++) line(0, 237 + k * 94.3, 3092, 237 + k * 94.3, "#f5f6f8");
line(3082, 220, 3082, 2036, "#f5f6f8");

// volume profile
function profileRow(i, a, b) {
  const y = 320 + i * 28.755;
  rect(a, y, b - a, 27, "#f5c083");
  rect(b, y, 3082 - b, 27, "#8499f8");
}
profileTop.forEach((r, i) => profileRow(i, 2300 + r[0] / 1.69, 2300 + r[1] / 1.69));
profileBottom.forEach((r, i) => profileRow(i + 29, 2400 + r[0] / 1.894, 2400 + r[1] / 1.894));

// candles
let index = 0;
blocks.forEach((block) => {
  block.rows.forEach((c) => {
    const x = 9 + 14 * index++;
    const [high, top, bot, low] = c.slice(1).map((v) => block.y0 + v / block.scale);
    const color = c[0] ? GREEN : RED;
    const h = bot - top;
    if (top > high) rect(x - 1, high, 2, top - high, color);
    if (low > bot) rect(x - 1, bot, 2, low - bot, color);
    if (c[0] && h > 4.1) {
      out += `<rect x="${x - 4}" y="${top}" width="8.500" height="${h}" fill="none" stroke="${color}" stroke-width="1.800"/>`;
    } else {
      rect(x - 5, top, 10, h, color);
    }
  });
});

// labels under the lines
fibLevels.forEach(([label, y]) => text(1043, y + 1, "fib-label", label, "end"));
text(1074, 1756, "peak-label", "0.04890");
path("M1067 1755h-14m5-5-5 5 5 5", INK, 2.5);
text(2817, 318, "peak-label", "0.20137");
path("M2912 318h14m-5-5 5 5-5 5", INK, 2.5);

// fibonacci retracement
fibLevels.forEach(([, y]) => line(1059, y, 2641, y, FIB));
line(1059, 1755, 2641, 729, FIB, 'stroke-dasharray="8 12"');

// ema
out += `<polyline fill="none" stroke="#72cfb0" stroke-width="2" points="${ema.join(" ")}"/>`;

// last price
line(0, 1138, 3082, 1138, "#4569a8");

// axis
for (let k = 0; k < 20; k++) {
  const price = (0.21 - k * 0.01).toFixed(5);
  text(3106, 238 + k * 94.3, "axis-label", price);
}
rect(3082, 1119, 135, 39, "#456bb5");
line(3084, 1139, 3094, 1139, "#fff");
text(3106, 1141, "axis-tag", "0.11446");

document.getElementById("chart").innerHTML = out;
```
